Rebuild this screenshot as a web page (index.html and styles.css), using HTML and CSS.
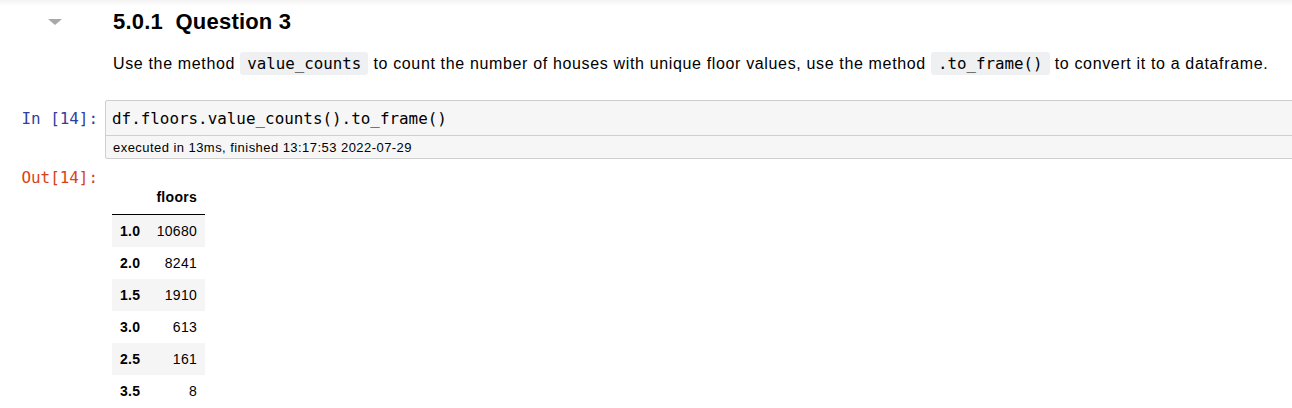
FILE: index.html
```html
<!DOCTYPE html>
<html>
<head>
<meta charset="utf-8">
<link rel="stylesheet" href="styles.css">
</head>
<body>
<div class="notebook">
  <div class="cell text-cell">
    <div class="prompt collapse-col"><span class="caret"></span></div>
    <div class="inner">
      <h3 class="heading">5.0.1&nbsp;&nbsp;Question 3</h3>
      <p class="para">Use the method <code class="inline">value_counts</code> to count the number of houses with unique floor values, use the method <code class="inline">.to_frame()</code> to convert it to a dataframe.</p>
    </div>
  </div>

  <div class="cell code-cell">
    <div class="prompt in-prompt">In&nbsp;[14]:</div>
    <div class="input-area">
      <div class="code-line">df.floors.value_counts().to_frame()</div>
      <div class="exec-time">executed in 13ms, finished 13:17:53 2022-07-29</div>
    </div>
  </div>

  <div class="cell output-cell">
    <div class="prompt out-prompt">Out[14]:</div>
    <div class="output-area">
      <table class="df">
        <thead>
          <tr><th></th><th>floors</th></tr>
        </thead>
        <tbody>
          <tr><th>1.0</th><td>10680</td></tr>
          <tr><th>2.0</th><td>8241</td></tr>
          <tr><th>1.5</th><td>1910</td></tr>
          <tr><th>3.0</th><td>613</td></tr>
          <tr><th>2.5</th><td>161</td></tr>
          <tr><th>3.5</th><td>8</td></tr>
        </tbody>
      </table>
    </div>
  </div>
</div>
</body>
</html>
```

FILE: styles.css
```css
html, body {
  margin: 0;
  padding: 0;
  background: #ffffff;
  overflow: hidden;
}

body {
  font-family: "Liberation Sans", Arial, sans-serif;
  color: #000000;
}

.notebook {
  background: linear-gradient(to bottom, #f3f3f3 0px, #ffffff 6px);
  width: 1300px;
}

.cell {
  display: flex;
  align-items: flex-start;
}

.prompt {
  width: 98px;
  flex: 0 0 98px;
  padding-right: 7px;
  text-align: right;
  font-family: "DejaVu Sans Mono", monospace;
  font-size: 15.9px;
  line-height: 20px;
}

.collapse-col {
  position: relative;
  height: 30px;
}

.caret {
  position: absolute;
  left: 48px;
  top: 19px;
  width: 0;
  height: 0;
  border-left: 7px solid transparent;
  border-right: 7px solid transparent;
  border-top: 6px solid #a8a8a8;
}

.inner {
  padding-left: 8px;
  flex: 1;
}

.heading {
  margin: 9px 0 0 0;
  font-size: 22px;
  line-height: 26px;
  font-weight: bold;
  letter-spacing: 0.2px;
}

.para {
  margin: 17px 0 0 0;
  font-size: 16px;
  line-height: 24px;
  letter-spacing: 0.65px;
}

.inline {
  font-family: "DejaVu Sans Mono", monospace;
  font-size: 15.8px;
  letter-spacing: 0;
  background: #eff0f1;
  padding: 2px 7px;
  border-radius: 3px;
}

.code-cell {
  margin-top: 24px;
}

.in-prompt {
  color: #303f9f;
  padding-top: 9px;
}

.input-area {
  flex: 1;
  border: 1px solid #cfcfcf;
  border-radius: 2px;
  background: #f6f6f6;
}

.code-line {
  font-family: "DejaVu Sans Mono", monospace;
  font-size: 15.9px;
  line-height: 20px;
  padding: 8px 6px 6px 6px;
  color: #000;
}

.exec-time {
  border-top: 1px solid #cfcfcf;
  font-size: 13px;
  line-height: 15px;
  letter-spacing: 0.45px;
  padding: 4px 7px 3px 7px;
  color: #000;
}

.output-cell {
  margin-top: 4px;
}

.out-prompt {
  color: #d84315;
  padding-top: 5px;
}

.output-area {
  flex: 1;
  padding-left: 7px;
}

.df {
  border-collapse: collapse;
  border-spacing: 0;
  margin-top: 18px;
  font-size: 14px;
  letter-spacing: 0.3px;
}

.df th, .df td {
  padding: 8px 8px;
  line-height: 16px;
  text-align: right;
  vertical-align: middle;
  white-space: nowrap;
}

.df thead tr {
  border-bottom: 1px solid #000;
}

.df thead th {
  font-weight: bold;
  padding-bottom: 9px;
}

.df tbody th {
  font-weight: bold;
}

.df tbody tr:nth-child(odd) {
  background: #f5f5f5;
}
```
